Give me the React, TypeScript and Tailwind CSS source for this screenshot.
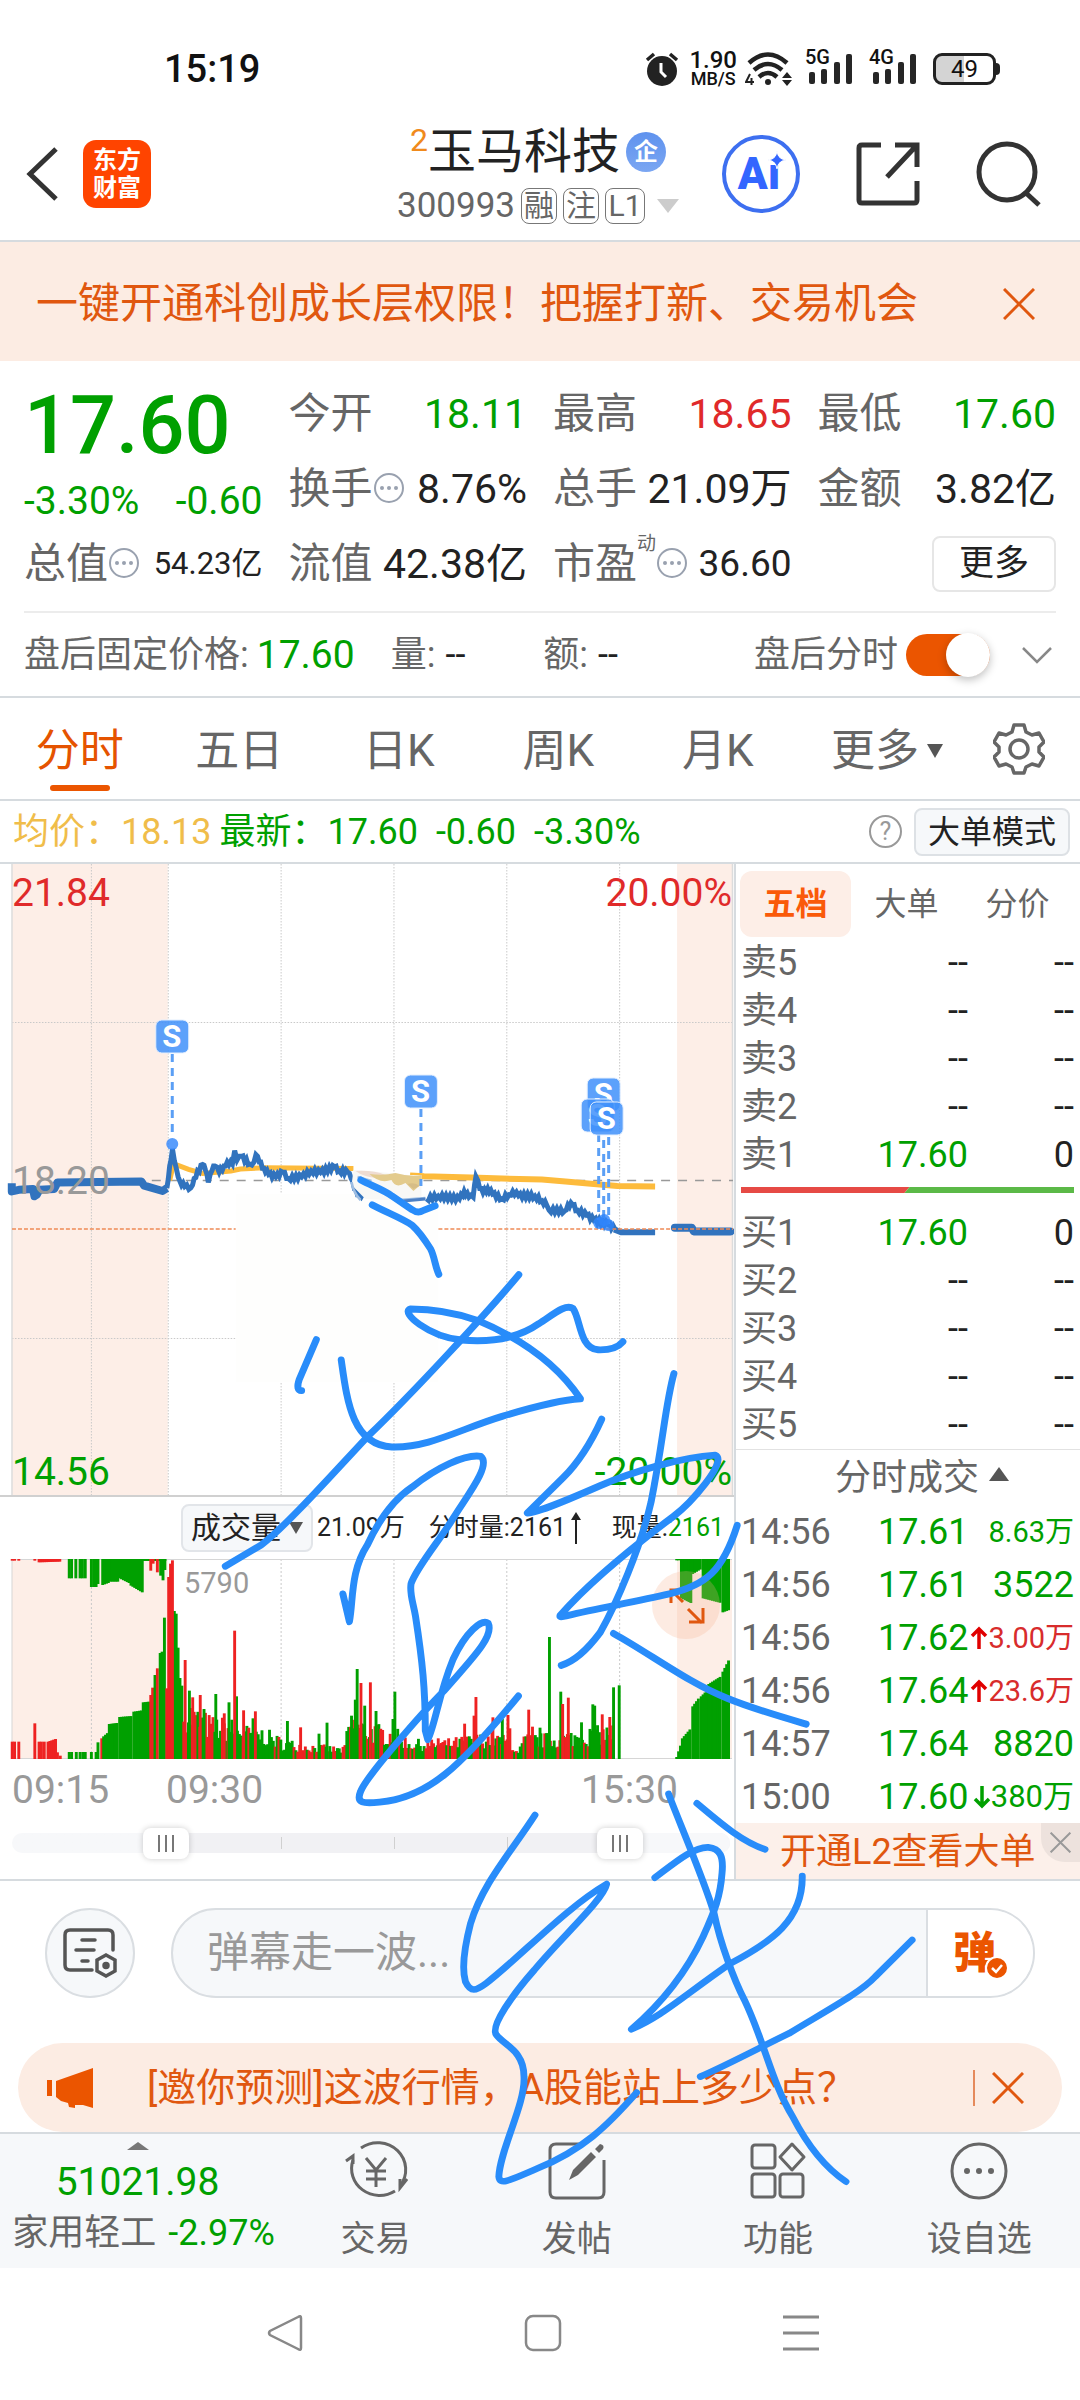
import React from "react";

type Point = [number, number];

const FONT = "font-[Roboto,'Noto_Sans_CJK_SC',sans-serif]";

/* ---------- data ---------- */

const TABS = ["分时", "五日", "日K", "周K", "月K"];

const SELLS = [
  ["卖5", "--", "--"],
  ["卖4", "--", "--"],
  ["卖3", "--", "--"],
  ["卖2", "--", "--"],
  ["卖1", "17.60", "0"],
];
const BUYS = [
  ["买1", "17.60", "0"],
  ["买2", "--", "--"],
  ["买3", "--", "--"],
  ["买4", "--", "--"],
  ["买5", "--", "--"],
];

type Trade = { time: string; price: string; amount: string; size?: string; dir?: "up" | "down" };
const TRADES: Trade[] = [
  { time: "14:56", price: "17.61", amount: "8.63万", size: "text-[29px] leading-10" },
  { time: "14:56", price: "17.61", amount: "3522" },
  { time: "14:56", price: "17.62", amount: "3.00万", size: "text-[29px] leading-10", dir: "up" },
  { time: "14:56", price: "17.64", amount: "23.6万", size: "text-[29px] leading-10", dir: "up" },
  { time: "14:57", price: "17.64", amount: "8820" },
  { time: "15:00", price: "17.60", amount: "380万", size: "text-[31px] leading-10", dir: "down" },
];

/* Chart samples are stored on a 1557-unit wide grid and scaled to the plot. */
const toX = (v: number) => v / 2.119;
const toY = (v: number) => v / 2.45 - 4;

const AUCTION: Point[] = [[25, 792], [25, 812], [40, 808], [70, 806], [73, 824], [78, 820], [84, 808], [115, 806], [122, 790], [300, 788], [306, 798], [345, 811], [354, 804]];
const PRICE_A: Point[] = [[354, 804], [360, 750], [366, 708], [374, 755], [382, 788], [392, 800], [405, 803], [412, 780], [430, 746], [436, 760], [442, 790], [450, 760], [456, 750], [465, 765], [475, 750], [482, 740], [493, 745], [498, 712], [503, 735], [512, 726], [530, 745], [539, 740], [543, 722], [550, 740], [560, 755], [570, 770], [585, 776], [600, 765], [612, 780], [640, 776], [660, 762], [680, 765], [710, 752], [720, 762], [738, 765], [745, 780], [752, 805], [762, 820], [775, 822]];
const PRICE_B: Point[] = [[905, 830], [930, 824], [975, 830], [985, 812], [995, 826], [1004, 826], [1010, 776], [1018, 805], [1025, 815], [1035, 805], [1045, 818], [1065, 830], [1080, 820], [1088, 812], [1100, 822], [1135, 824], [1150, 835], [1160, 845], [1165, 858], [1198, 860], [1205, 845], [1215, 845], [1225, 858], [1245, 870], [1260, 882], [1290, 892], [1305, 905]];
const AVERAGE_A: Point[] = [[360, 785], [368, 745], [378, 748], [400, 758], [430, 768], [490, 762], [510, 757], [560, 754], [750, 756]];
const AVERAGE_B: Point[] = [[870, 773], [900, 775], [1000, 778], [1150, 783], [1200, 788], [1260, 794], [1310, 799], [1390, 800]];

const path = (pts: Point[]) => "M" + pts.map(([x, y]) => `${toX(x).toFixed(1)},${toY(y).toFixed(1)}`).join("L");

const jagged = (pts: Point[]): Point[] => {
  const out: Point[] = [];
  let k = 0;
  for (let i = 0; i < pts.length - 1; i++) {
    const [x0, y0] = pts[i];
    const [x1, y1] = pts[i + 1];
    const n = Math.max(1, Math.round((x1 - x0) / 4));
    for (let j = 0; j < n; j++) {
      const t = j / n;
      out.push([x0 + (x1 - x0) * t, y0 + (y1 - y0) * t + (j === 0 ? 0 : k % 2 ? 5 : -5)]);
      k++;
    }
  }
  out.push(pts[pts.length - 1]);
  return out;
};

const R = "#ee2222";
const G = "#00a000";
type Bar = [number, number, string];

const span = (from: number, to: number, h0: number, h1: number, color: string): Bar[] => {
  const out: Bar[] = [];
  for (let x = from; x <= to; x += 4) {
    const t = to === from ? 0 : (x - from) / (to - from);
    out.push([x, h0 + (h1 - h0) * t, color]);
  }
  return out;
};

const ENVELOPE: Point[] = [[396, 145], [410, 120], [450, 95], [500, 88], [530, 72], [560, 70], [600, 46], [650, 36], [730, 26], [742, 100], [790, 80], [840, 68], [870, 44], [930, 42], [980, 50], [1040, 60], [1080, 50], [1100, 15], [1112, 55], [1180, 58], [1240, 68], [1300, 78]];
const envelope = (x: number) => {
  const i = Math.max(1, ENVELOPE.findIndex(([ex]) => ex >= x));
  const [x0, y0] = ENVELOPE[i - 1];
  const [x1, y1] = ENVELOPE[i];
  return y0 + ((y1 - y0) * (x - x0)) / (x1 - x0);
};

const session = (): Bar[] => {
  const out: Bar[] = [];
  let seed = 7;
  const rnd = () => (seed = (seed * 16807) % 2147483647) / 2147483647;
  for (let x = 396; x <= 1300; x += 4) {
    const green = x > 530 && x < 592 ? 0.9 : 0.5;
    out.push([x, envelope(x) * (0.55 + rnd() * 0.85), rnd() < green ? G : R]);
  }
  return out;
};

const VOLUME: Bar[] = [
  ...[26, 31, 40].map((x): Bar => [x, 52, R]),
  [74, 107, R], [83, 52, R], [88, 52, R], [94, 52, R],
  ...span(102, 118, 52, 60, R), [122, 20, R], [128, 10, R],
  ...[147, 152, 162, 170, 176, 181, 194, 204].map((x): Bar => [x, 21, G]),
  [208, 50, G], [216, 62, R], ...span(220, 230, 68, 80, G), ...span(232, 248, 105, 108, G),
  ...span(254, 280, 126, 129, G), ...span(284, 302, 142, 146, G), ...span(304, 316, 170, 172, G),
  [320, 192, R], [324, 214, R], [329, 252, G], [334, 272, R], [340, 318, G], [344, 322, G], [349, 424, G],
  [354, 212, R], [370, 444, G], [374, 436, G], [358, 546, R], [362, 586, R], [366, 596, R],
  [378, 334, G], [382, 243, G], [386, 220, G], [390, 112, R],
  ...session(),
  [393, 297, R], [402, 205, G], [409, 185, R], [425, 192, R], [433, 150, G], [458, 195, G], [476, 137, R],
  [486, 170, G], [502, 188, G], [498, 385, R], [517, 146, R], [537, 122, G], [542, 143, R], [610, 114, G],
  [638, 95, R], [677, 76, G], [694, 109, G], [746, 130, G], [754, 178, G], [758, 270, G], [766, 228, R],
  [774, 160, G], [786, 230, R], [798, 144, G], [834, 120, G], [838, 202, G], [930, 62, R], [986, 106, R], [1006, 130, R],
  [1010, 186, R], [1046, 125, R], [1066, 120, G], [1078, 132, R], [1082, 92, R], [1122, 148, R], [1130, 97, R],
  [1146, 94, G], [1166, 366, G], [1190, 202, G], [1194, 165, R], [1206, 184, R], [1234, 110, G],
  [1258, 164, G], [1262, 160, G], [1278, 134, R], [1294, 126, R], [1302, 215, G], [1314, 221, G],
  ...span(1436, 1444, 6, 40, G), ...span(1448, 1466, 62, 92, G), ...span(1470, 1484, 158, 185, G),
  ...span(1488, 1500, 188, 205, G), ...span(1504, 1530, 225, 248, G), ...span(1534, 1549, 262, 304, G),
];

const MATCHED: Bar[] = [
  [26, 5, R], [31, 5, R], [40, 5, R], [74, 5, R], ...span(83, 128, 10, 8, R),
  ...[147, 152, 161, 170, 175, 181].map((x): Bar => [x, 58, G]),
  ...[194, 199, 204].map((x): Bar => [x, 84, G]), [208, 75, G],
  ...span(218, 230, 78, 72, G), ...span(234, 250, 68, 68, G), ...span(254, 274, 58, 72, G),
  ...span(278, 302, 80, 100, G), ...span(306, 350, 6, 6, G),
  [320, 35, R], [325, 14, R], [334, 40, R], [341, 50, G], [346, 64, G], [350, 33, G],
  ...span(1436, 1442, 4, 4, G), ...span(1446, 1466, 118, 132, G), ...span(1470, 1488, 45, 30, G),
  ...span(1492, 1530, 118, 132, G), ...span(1534, 1549, 160, 152, G),
];

/* ---------- small parts ---------- */

const CloseIcon = ({ className }: { className: string }) => (
  <svg viewBox="0 0 32 32" className={className} fill="none" stroke="currentColor" strokeWidth="3">
    <path d="M1 1l30 30M31 1L1 31" />
  </svg>
);

const Dots = () => (
  <svg viewBox="0 0 32 32" className="size-8 shrink-0 text-gray-400" fill="none" stroke="currentColor" strokeWidth="2">
    <circle cx="16" cy="15" r="14" />
    <g fill="currentColor" stroke="none">
      <circle cx="9" cy="15" r="2" />
      <circle cx="16" cy="15" r="2" />
      <circle cx="23" cy="15" r="2" />
    </g>
  </svg>
);

const Signal = ({ label }: { label: string }) => (
  <div className="relative h-9 w-12" role="img" aria-label={label}>
    <span className="absolute -top-1 left-0 text-[20px] leading-5 font-medium">{label}</span>
    <svg viewBox="0 0 48 36" className="size-full" fill="#262626">
      <rect x="4" y="21" width="6" height="12" rx="2" />
      <rect x="16" y="18" width="6" height="15" rx="2" />
      <rect x="29" y="11" width="6" height="22" rx="2" />
      <rect x="41" y="3" width="6" height="30" rx="2" />
    </svg>
  </div>
);

function StatusBar() {
  return (
    <div className="flex h-[121px] items-center justify-between pt-4 pr-[80px] pl-[164px] text-[#111]">
      <span className="text-[38px] leading-[44px] font-medium">15:19</span>
      <div className="flex items-center">
        <svg viewBox="0 0 34 36" className="mr-2.5 h-9 w-[34px]" fill="#222">
          <circle cx="17" cy="20" r="15" />
          <path d="M2 9l7-6M32 9l-7-6" stroke="#222" strokeWidth="3.500" />
          <path d="M16 12v9l5 5" stroke="#fff" strokeWidth="3" fill="none" />
        </svg>
        <div className="mr-2 flex flex-col items-center">
          <span className="text-[24px] leading-5 font-medium">1.90</span>
          <span className="text-[18px] leading-[18px] font-medium">MB/S</span>
        </div>
        <svg viewBox="0 0 48 36" className="mr-3 h-9 w-12" fill="none" stroke="#222" strokeWidth="4.500">
          <path d="M4 12q19-17 38 0M9 19q14-12 28 0M14 26q9-8 18 0" />
          <circle cx="23" cy="31" r="3" fill="#222" stroke="none" />
          <path d="M37 27l5-6 5 6zM37 29l5 6 5-6z" fill="#222" stroke="none" />
          <path d="M5 23l-4 8h8M6.500 27v7" strokeWidth="2" />
        </svg>
        <Signal label="5G" />
        <div className="w-4" />
        <Signal label="4G" />
        <div className="ml-4 flex items-center">
          <div className="flex h-8 w-[63px] items-center justify-center rounded-[9px] border-[3px] border-[#222] bg-linear-to-r from-[#d4d4d4] from-50% to-white to-50% text-[24px] leading-6">
            49
          </div>
          <div className="h-3 w-1 rounded-r bg-[#222]" />
        </div>
      </div>
    </div>
  );
}

function Header() {
  return (
    <header className="grid h-[121px] grid-cols-[1fr_auto_1fr] items-center border-b-2 border-[#d6dbdf] pr-[38px] pb-3.5 pl-[26px]">
      <div className="flex items-center gap-[25px]">
        <button aria-label="返回">
          <svg viewBox="0 0 32 54" className="h-[54px] w-8" fill="none" stroke="#333" strokeWidth="5">
            <path d="M30 2L4 27l26 25" />
          </svg>
        </button>
        <div className="flex size-[68px] flex-col items-center justify-center rounded-[13px] bg-[#ff4400] text-[24px] leading-7 font-bold text-white">
          <span>东方</span>
          <span>财富</span>
        </div>
      </div>
      <div className="flex flex-col items-center pl-2">
        <div className="flex items-center">
          <span className="self-start text-[32px] leading-9 text-[#f08a1c]">2</span>
          <h1 className="text-[48px] leading-[60px] text-[#222]">玉马科技</h1>
          <span className="ml-1.5 flex size-10 items-center justify-center rounded-full bg-linear-to-b from-[#5f92ee] to-[#7ba6f2] text-[24px] leading-6 font-bold text-white">企</span>
        </div>
        <div className="mt-1 flex items-center gap-1.5 text-[35px] leading-10 text-[#666]">
          <span>300993</span>
          <span className="flex size-9 items-center justify-center rounded-lg border border-[#777] text-[30px] leading-8">融</span>
          <span className="flex size-9 items-center justify-center rounded-lg border border-[#777] text-[30px] leading-8">注</span>
          <span className="flex h-9 w-10 items-center justify-center rounded-lg border border-[#777] text-[30px] leading-8">L1</span>
          <svg viewBox="0 0 22 14" className="ml-1.5 h-3.5 w-[22px]" fill="#ccc"><path d="M0 0h22L11 14z" /></svg>
        </div>
      </div>
      <div className="flex items-center justify-end gap-14">
        <button aria-label="Ai" className="relative flex size-[78px] items-center justify-center rounded-full border-4 border-[#3d6ff0] text-[#3366ff]">
          <span className="pr-1 text-[44px] leading-[44px] font-black">Aı</span>
          <svg viewBox="0 0 16 16" className="absolute top-3 right-2.5 size-[18px]" fill="currentColor" stroke="#fff" strokeWidth="1"><path d="M8 0q1 7 8 8q-7 1-8 8q-1-7-8-8q7-1 8-8z" /></svg>
        </button>
        <button aria-label="分享">
          <svg viewBox="0 0 64 64" className="size-16" fill="none" stroke="#333" strokeWidth="5">
            <path d="M25 3H6q-3 0-3 3v52q0 3 3 3h52q3 0 3-3V39M39 3h22v22M61 3L31 35" />
          </svg>
        </button>
        <button aria-label="搜索">
          <svg viewBox="0 0 66 66" className="size-[66px]" fill="none" stroke="#333" strokeWidth="5">
            <circle cx="31" cy="31" r="28" />
            <path d="M50 52l13 12" />
          </svg>
        </button>
      </div>
    </header>
  );
}

function Metric({ label, value, color = "text-[#222]", extra }: { label: string; value: string; color?: string; extra?: React.ReactNode }) {
  return (
    <div className="flex h-[75px] items-center justify-between whitespace-nowrap">
      <span className="flex items-center text-[42px] leading-[50px] text-[#666]">{label}{extra}</span>
      <span className={"text-[41px] leading-[50px] " + color}>{value}</span>
    </div>
  );
}

function Quote() {
  return (
    <section className="px-6">
      <div className="grid grid-cols-4 gap-x-[26px] border-b-2 border-[#ececec] pt-[15px] pb-2.5">
        <div className="row-span-2 flex flex-col text-[#00a000]">
          <span className="pt-2 text-[81px] leading-[84px] font-medium">17.60</span>
          <div className="flex justify-between pt-2 text-[39px] leading-[50px]">
            <span>-3.30%</span>
            <span>-0.60</span>
          </div>
        </div>
        <Metric label="今开" value="18.11" color="text-[#00a000]" />
        <Metric label="最高" value="18.65" color="text-[#e02a2a]" />
        <Metric label="最低" value="17.60" color="text-[#00a000]" />
        <Metric label="换手" value="8.76%" extra={<Dots />} />
        <Metric label="总手" value="21.09万" />
        <Metric label="金额" value="3.82亿" />
        <div className="flex h-[75px] items-center justify-between whitespace-nowrap">
          <span className="flex items-center text-[42px] leading-[50px] text-[#666]">总值<Dots /></span>
          <span className="text-[31px] leading-10 text-[#222]">54.23亿</span>
        </div>
        <Metric label="流值" value="42.38亿" />
        <div className="flex h-[75px] items-center justify-between whitespace-nowrap">
          <span className="flex items-center text-[42px] leading-[50px] text-[#666]">
            市盈<sup className="-top-5 text-[19px] leading-5">动</sup><Dots />
          </span>
          <span className="text-[37px] leading-[50px] text-[#222]">36.60</span>
        </div>
        <div className="flex h-[75px] items-center justify-end">
          <button className="h-[56px] w-[124px] rounded-lg border-2 border-[#e6e6e6] text-[35px] leading-10 text-[#222]">更多</button>
        </div>
      </div>
    </section>
  );
}

function AfterHours() {
  return (
    <section className="flex h-[85px] items-center border-b-2 border-[#d6dbdf] pr-7 pl-6 text-[36px] leading-[44px] whitespace-nowrap text-[#666]">
      <span>盘后固定价格:</span>
      <span className="ml-2 text-[39px] text-[#00a000]">17.60</span>
      <span className="ml-9">量:</span>
      <span className="ml-2.5 text-[#222]">--</span>
      <span className="ml-[78px]">额:</span>
      <span className="ml-2.5 text-[#222]">--</span>
      <label className="ml-auto flex items-center gap-2">
        盘后分时
        <span className="relative h-[42px] w-[84px]">
          <input type="checkbox" role="switch" defaultChecked className="absolute inset-0 size-full appearance-none rounded-full bg-[#eb5500]" />
          <span className="pointer-events-none absolute -top-px right-0 size-11 rounded-full bg-white shadow-[0_3px_8px_rgba(0,0,0,0.25)]" />
        </span>
      </label>
      <button aria-label="展开" className="ml-8">
        <svg viewBox="0 0 30 18" className="h-[18px] w-[30px]" fill="none" stroke="#888" strokeWidth="2.500"><path d="M1 2l14 14L29 2" /></svg>
      </button>
    </section>
  );
}

function ChartTabs() {
  return (
    <nav className="flex h-[103px] items-center border-b-2 border-[#d6dbdf] pt-1 text-[44px] leading-[54px] text-[#666]">
      {TABS.map((tab, i) => (
        <button key={tab} className={i === 0 ? "relative h-full flex-1 text-[#e55300]" : "h-full flex-1"}>
          {tab}
          {i === 0 && <span className="absolute bottom-2 left-1/2 h-1.5 w-[60px] -translate-x-1/2 rounded-full bg-[#eb5500]" />}
        </button>
      ))}
      <button className="flex h-full flex-1 items-center justify-end gap-2">
        更多
        <svg viewBox="0 0 16 14" className="mr-3.5 h-3.5 w-4" fill="#555"><path d="M0 0h16L8 14z" /></svg>
      </button>
      <button aria-label="设置" className="flex h-full w-[123px] items-center justify-center pb-1">
        <svg viewBox="0 0 52 52" className="size-[52px]" fill="none" stroke="#666" strokeWidth="3.500" strokeLinejoin="round">
          <path d="M21 2h10l2 7 6 3 7-2 5 9-5 5v5l5 5-5 9-7-2-6 3-2 6H21l-2-6-6-3-7 2-5-9 5-5v-5l-5-5 5-9 7 2 6-3z" />
          <circle cx="26" cy="26" r="9" />
        </svg>
      </button>
    </nav>
  );
}

function InfoLine() {
  return (
    <div className="flex h-[61px] items-center pr-2.5 pl-[13px] text-[36px] leading-[44px] whitespace-nowrap">
      <span className="text-[#f0bd4a]">均价：18.13</span>
      <span className="ml-2 flex gap-[18px] text-[#00a000]">
        <span>最新：17.60</span>
        <span>-0.60</span>
        <span>-3.30%</span>
      </span>
      <button aria-label="帮助" className="ml-auto flex size-[33px] items-center justify-center rounded-full border-2 border-[#999] text-[25px] leading-6 text-[#999]">?</button>
      <button className="ml-3 h-12 w-[156px] rounded-lg border-2 border-[#dde1e5] bg-[#f6f8fa] text-[32px] leading-10 text-[#222]">大单模式</button>
    </div>
  );
}

const MARKS: Point[] = [[172, 172], [421, 227], [604, 230], [598, 251], [607, 254]];

function PriceChart() {
  return (
    <div className="relative text-[39px] leading-[46px]">
      <svg viewBox="0 0 735 633" preserveAspectRatio="none" className="h-[633px] w-full" fill="none">
        <rect x="12" y="0" width="156" height="632" fill="#fdeee7" />
        <rect x="678" y="0" width="55" height="632" fill="#fdeee7" />
        <path d="M91.500 0V632M168.500 0V632M281.500 0V632M394.500 0V632M507.500 0V632M620.500 0V632M12 158.500H733M12 474.500H733" stroke="#c9c9c9" strokeDasharray="1.500 1.500" />
        <rect x="236" y="330" width="203" height="188" fill="#fefefd" />
        <path d="M12 0V632M733.500 0V632" stroke="#dcdcdc" strokeWidth="1.500" />
        <path d="M0 632H735" stroke="#d0d0d0" strokeWidth="2" />
        <path d="M152 316.500H734" stroke="#999" strokeWidth="1.500" strokeDasharray="9 8" />
        <path d={path(AUCTION)} stroke="#3173be" strokeWidth="8" strokeLinejoin="round" />
        <path d={path(AVERAGE_A)} stroke="#fdbb3c" strokeWidth="5" />
        <path d={path(AVERAGE_B)} stroke="#fdbb3c" strokeWidth="6" />
        <path d={path(jagged(PRICE_A))} stroke="#3173be" strokeWidth="5" />
        <path d={path(jagged(PRICE_B))} stroke="#3173be" strokeWidth="5" />
        <path d={path([[1303, 905], [1318, 912], [1390, 912]])} stroke="#3173be" strokeWidth="6" />
        <path d={path([[1432, 901], [1468, 901], [1472, 910], [1550, 910]])} stroke="#3173be" strokeWidth="8" strokeLinecap="round" strokeLinejoin="round" />
        <g>
          <path d="M354 306l16 1 40 4 12 0 0 22-14 4-42-2-14-14z" fill="#f8f8f6" />
          <path d="M356 307q18-1 30 4l-8 3q-14-1-22-7z" fill="#efdcd2" />
          <path d="M370 310q14 2 26-1 14 4 26 2v9l-8 7-8-8q-10 6-14-3-12 4-22-6z" fill="#e3cb8d" />
          <path d="M408 320q8-2 12 2l-6 3z" fill="#d6bd86" />
          <path d="M352 318q2 11 9 18M358 313l14 4M400 336l26-2" stroke="#9dbde2" strokeWidth="2.500" />
          <path d="M404 337l22-2" stroke="#4d80c4" strokeWidth="3" />
        </g>
        <path d="M12 365H236M439 365H734" stroke="#ee8b57" strokeWidth="1.500" strokeDasharray="4 2" />
        <g stroke="#5b9ff5" strokeWidth="3" strokeDasharray="8 6">
          <path d="M172.500 190V274M421.500 245V322M599.500 270V356M604.500 276V354M609.500 273V360" />
        </g>
        <g fill="#2f84fb" fillOpacity="0.800">
          <circle cx="172.500" cy="280" r="6" />
          <circle cx="600" cy="359" r="6" />
          <circle cx="605" cy="356" r="6" />
          <circle cx="609" cy="361" r="6" />
        </g>
        {MARKS.map(([x, y], i) => (
          <g key={i}>
            <rect x={x - 16} y={y - 16} width="33" height="33" rx="6" fill="#4090fa" fillOpacity="0.850" stroke="#e4effe" strokeWidth="1" />
            <text x={x} y={y + 11} textAnchor="middle" fill="#fff" fontSize="31" fontWeight="700" fontFamily="Roboto">S</text>
          </g>
        ))}
      </svg>
      <span className="absolute top-1.5 left-3 text-[#e02a2a]">21.84</span>
      <span className="absolute top-1.5 right-0.5 text-[#e02a2a]">20.00%</span>
      <span className="absolute top-[294px] left-3 text-[#999]">18.20</span>
      <span className="absolute bottom-0.5 left-3 text-[#00a000]">14.56</span>
      <span className="absolute right-0.5 bottom-0.5 text-[#00a000]">-20.00%</span>
    </div>
  );
}

function VolumeChart() {
  return (
    <div>
      <div className="flex h-[62px] items-center pr-2.5 pl-[181px] text-[25px] leading-8 whitespace-nowrap text-[#222]">
        <button className="mr-1 flex h-12 w-[132px] items-center justify-between rounded-lg border-2 border-[#e2e5e9] bg-[#f6f8fa] px-2 text-[30px] leading-9">
          成交量
          <svg viewBox="0 0 14 12" className="h-3 w-3.5" fill="#555"><path d="M0 0h14L7 12z" /></svg>
        </button>
        <span>21.09万</span>
        <span className="ml-6 flex items-center">
          分时量:2161
          <svg viewBox="0 0 12 32" className="ml-1 h-8 w-3" fill="#222"><path d="M6 0l5 8H7v24H5V8H1z" /></svg>
        </span>
        <span className="ml-auto">现量:<span className="text-[#00a000]">2161</span></span>
      </div>
      <div className="relative">
        <svg viewBox="0 0 735 200" preserveAspectRatio="none" className="h-[200px] w-full">
          <rect x="12" y="0" width="156" height="200" fill="#fdeee7" />
          <rect x="678" y="0" width="55" height="200" fill="#fdeee7" />
          <path d="M91.500 0V200M281.500 0V200M394.500 0V200M507.500 0V200M620.500 0V200" stroke="#c9c9c9" strokeDasharray="2 2" />
          <path d="M12 .5H733M12 199.500H733M12 0V200" stroke="#d6d6d6" />
          {VOLUME.map(([x, h, c], i) => (
            <rect key={i} x={toX(x) - 1.5} y={200 - h / 3} width="2.900" height={h / 3} fill={c} />
          ))}
          {MATCHED.map(([x, h, c], i) => (
            <rect key={i} x={toX(x) - 1.5} y="0" width="2.900" height={h / 3} fill={c} />
          ))}
        </svg>
        <span className="absolute top-2 left-[184px] text-[29px] leading-8 text-[#999]">5790</span>
        <button aria-label="放大" className="absolute top-3 right-[14px] size-[68px] rounded-full bg-[#f7b08a]/25">
          <svg viewBox="0 0 68 68" className="size-full" fill="none" stroke="#e0570f" strokeWidth="3">
            <path d="M19 32V19h13M20 20l11 11M36 38l14 14M51 37v14H37" />
          </svg>
        </button>
      </div>
      <div className="flex h-[62px] items-center text-[39px] leading-[46px] text-[#999]">
        <span className="ml-3 w-[154px]">09:15</span>
        <span>09:30</span>
        <span className="mr-14 ml-auto">15:30</span>
      </div>
      <div className="relative h-[58px]">
        <div className="absolute top-3 right-1 left-3 h-5 rounded-full bg-linear-to-r from-[#f7f8fa] from-21% via-[#f1f1f4] via-21% to-[#f1f1f4]" />
        <div className="absolute top-3 right-1 h-5 w-[111px] rounded-r-full bg-[#f7f8fa]" />
        <span className="absolute top-4 left-[281px] h-3 w-px bg-[#d0d0d0]" />
        <span className="absolute top-4 left-[394px] h-3 w-px bg-[#d0d0d0]" />
        <span className="absolute top-4 left-[507px] h-3 w-px bg-[#d0d0d0]" />
        {["left-[143px]", "right-[91px]"].map((pos, i) => (
          <label key={pos} className={"absolute top-[7px] flex h-[31px] w-[46px] items-center justify-center gap-[5px] rounded-lg bg-white shadow-[0_0_6px_rgba(0,0,0,0.2)] " + pos}>
            <span className="h-[17px] w-0.5 bg-[#777]" />
            <span className="h-[17px] w-0.5 bg-[#777]" />
            <span className="h-[17px] w-0.5 bg-[#777]" />
            <input type="range" aria-label={i ? "结束时间" : "开始时间"} className="absolute inset-0 size-full opacity-0" />
          </label>
        ))}
      </div>
    </div>
  );
}

function BookTable({ rows, label }: { rows: string[][]; label: string }) {
  return (
    <table aria-label={label} className="w-full table-fixed text-[36px] leading-[46px]">
      <tbody>
        {rows.map(([name, price, qty]) => (
          <tr key={name} className="h-12">
            <th scope="row" className="w-[100px] p-0 text-left font-normal text-[#666]">{name}</th>
            <td className={price === "--" ? "p-0 text-right text-[#222]" : "p-0 text-right text-[#00a000]"}>{price}</td>
            <td className="w-[106px] p-0 text-right text-[#222]">{qty}</td>
          </tr>
        ))}
      </tbody>
    </table>
  );
}

function OrderBook() {
  return (
    <aside className="flex w-[346px] shrink-0 flex-col border-l-2 border-[#d6dbdf]">
      <div className="flex h-[73px] pt-[7px] pl-1 text-[32px] leading-10 text-[#666]">
        <button className="h-[66px] w-[111px] rounded-xl bg-[#fdeee7] font-bold text-[#fa5a0a]">五档</button>
        <button className="h-[66px] w-[111px]">大单</button>
        <button className="h-[66px] w-[111px]">分价</button>
      </div>
      <div className="pt-0.5 pr-1.5 pl-[5px]">
        <BookTable rows={SELLS} label="卖盘" />
        <svg viewBox="0 0 334 6" preserveAspectRatio="none" className="mt-2 mb-4 h-1.5 w-full">
          <path d="M0 0h169l-5 6H0z" fill="#e64a45" />
          <path d="M169 0h165v6H164z" fill="#5bb947" />
        </svg>
        <BookTable rows={BUYS} label="买盘" />
      </div>
      <button className="flex h-14 items-center justify-center gap-2.5 border-t border-[#e2e2e2] pl-7 text-[36px] leading-[44px] text-[#666]">
        分时成交
        <svg viewBox="0 0 20 14" className="mb-2 h-3.5 w-5" fill="#555"><path d="M0 14h20L10 0z" /></svg>
      </button>
      <table aria-label="分时成交" className="mr-1.5 ml-[5px] text-[36px] leading-[44px]">
        <tbody>
          {TRADES.map((t, i) => (
            <tr key={i} className="h-[53px]">
              <td className="w-[137px] p-0 text-[#666]">{t.time}</td>
              <td className="w-[90px] p-0 text-[#00a000]">{t.price}</td>
              <td className={t.dir === "up" ? "p-0 text-[#d82c2c]" : "p-0 text-[#00a000]"}>
                <span className="flex items-center justify-end">
                  {t.dir && (
                    <svg viewBox="0 0 18 24" className={t.dir === "up" ? "h-6 w-[18px] shrink-0 text-[#e00000]" : "h-6 w-[18px] shrink-0 rotate-180"} fill="none" stroke="currentColor" strokeWidth="3.500">
                      <path d="M9 23V3M2 10l7-7 7 7" />
                    </svg>
                  )}
                  <span className={t.size ?? ""}>{t.amount}</span>
                </span>
              </td>
            </tr>
          ))}
        </tbody>
      </table>
      <div className="relative flex flex-1 items-center bg-[#fcf0ea] pt-0.5 pl-11 text-[36px] leading-[44px] text-[#e0570f]">
        <a href="#l2">开通L2查看大单</a>
        <button aria-label="关闭" className="absolute top-0 right-0 flex h-[39px] w-[39px] items-center justify-center rounded-bl-3xl bg-[#ede2dd] text-[#999]">
          <CloseIcon className="size-[21px]" />
        </button>
      </div>
    </aside>
  );
}

function CommentBar() {
  return (
    <div className="flex h-[162px] items-start gap-9 px-[45px] pt-[27px]">
      <button aria-label="弹幕设置" className="flex size-[90px] shrink-0 items-center justify-center rounded-full border-2 border-[#dadee2] bg-[#f6f8fa]">
        <svg viewBox="0 0 56 52" className="h-[52px] w-14" fill="none" stroke="#555" strokeWidth="3.500" strokeLinecap="round">
          <path d="M30 43H8q-5 0-5-5V8q0-5 5-5h38q5 0 5 5v15M20 13h13M14 23h18M20 34h6" />
          <path d="M44 28l9 5v11l-9 5-9-5V33z" />
          <circle cx="44" cy="38.500" r="2" fill="#555" />
        </svg>
      </button>
      <div className="flex h-[90px] flex-1 overflow-hidden rounded-full border-2 border-[#dadee2] bg-[#f6f8fa]">
        <input aria-label="弹幕" placeholder="弹幕走一波..." className="min-w-0 flex-1 bg-transparent pl-[34px] text-[42px] leading-[52px] text-[#222] placeholder:text-[#999]" />
        <button aria-label="弹" className="relative w-[107px] border-l-2 border-[#dadee2] bg-white pr-3 text-[43px] leading-[52px] font-black text-[#eb5500]">
          弹
          <svg viewBox="0 0 24 24" className="absolute right-6 bottom-4 size-6" fill="#eb5500" stroke="#fff" strokeWidth="2">
            <circle cx="12" cy="12" r="11" />
            <path d="M7 12l4 4 6-7" fill="none" strokeWidth="2.500" />
          </svg>
        </button>
      </div>
    </div>
  );
}

function Promo() {
  return (
    <div className="mx-[18px] flex h-[89px] items-center rounded-full bg-[#fcece3] pr-[38px] pl-[29px] text-[39px] leading-[50px] whitespace-nowrap text-[#e0570f]">
      <svg viewBox="0 0 46 40" className="h-10 w-[46px]" fill="#eb5500">
        <path d="M46 0v40l-10-3h-8v3l-6-1-1-4-7-2-5-4V13zM0 12h5v16H0z" />
      </svg>
      <a href="#forecast" className="ml-[54px]">[邀你预测]这波行情，A股能站上多少点？</a>
      <span className="ml-auto h-9 w-0.5 bg-[#e58a5c]" />
      <button aria-label="关闭" className="ml-[17px]"><CloseIcon className="size-8" /></button>
    </div>
  );
}

const ACTIONS: { label: string; icon: React.ReactNode }[] = [
  {
    label: "交易",
    icon: (
      <>
        <path d="M17 8a28 27 0 0 1 39 38M51 51A28 27 0 0 1 9 20" />
        <path d="M2 21l7-5v8M63 39l-7 9v-9" />
        <path d="M22 18l10 12 10-12M32 30v17M22 31h20M22 39h20" />
      </>
    ),
  },
  {
    label: "发帖",
    icon: (
      <>
        <path d="M40 4H11q-6 0-6 6v42q0 6 6 6h42q6 0 6-6V20" />
        <path d="M24 40l4-10 18-18 5 5-18 18zM50 9l5-5q5 1 3 5l-4 4z" fill="#666" stroke="none" />
      </>
    ),
  },
  {
    label: "功能",
    icon: (
      <>
        <rect x="6" y="5" width="23" height="23" rx="3" />
        <rect x="6" y="34" width="23" height="23" rx="3" />
        <rect x="34" y="34" width="23" height="23" rx="3" />
        <path d="M46 4l12 13-12 13-12-13z" strokeLinejoin="round" />
      </>
    ),
  },
  {
    label: "设自选",
    icon: (
      <>
        <circle cx="32" cy="31" r="27" />
        <g fill="#666" stroke="none">
          <circle cx="20" cy="31" r="3" />
          <circle cx="32" cy="31" r="3" />
          <circle cx="44" cy="31" r="3" />
        </g>
      </>
    ),
  },
];

function BottomBar() {
  return (
    <footer className="flex h-[136px] border-t-2 border-[#d6dbdf] bg-[#f6f8fa]">
      <div className="flex w-[275px] flex-col items-center pt-2 whitespace-nowrap">
        <svg viewBox="0 0 22 8" className="h-2 w-[22px]" fill="#777"><path d="M0 8h22L11 0z" /></svg>
        <span className="pt-2 text-[39px] leading-[48px] text-[#00a000]">51021.98</span>
        <span className="flex gap-3 pt-0.5 pl-3 text-[36px] leading-[50px] text-[#666]">
          家用轻工<span className="text-[#00a000]">-2.97%</span>
        </span>
      </div>
      {ACTIONS.map(({ label, icon }) => (
        <button key={label} className="flex flex-1 flex-col items-center text-[35px] leading-[44px] text-[#666]">
          <svg viewBox="0 0 64 62" className="mt-1.5 mb-4 h-[62px] w-16 shrink-0" fill="none" stroke="#666" strokeWidth="3">{icon}</svg>
          {label}
        </button>
      ))}
    </footer>
  );
}

function SystemNav() {
  return (
    <nav className="flex h-[130px] items-center justify-center gap-[221px] pl-1.5">
      <button aria-label="后退"><svg viewBox="0 0 36 38" className="h-[38px] w-9" fill="none" stroke="#888" strokeWidth="2.500"><path d="M34 4v30q0 3-3 1L3 21q-2-2 0-4L31 3q3-2 3 1z" /></svg></button>
      <button aria-label="主页"><svg viewBox="0 0 38 38" className="size-[38px]" fill="none" stroke="#888" strokeWidth="2.500"><rect x="2" y="2" width="34" height="34" rx="7" /></svg></button>
      <button aria-label="多任务"><svg viewBox="0 0 36 38" className="h-[38px] w-9" stroke="#888" strokeWidth="3"><path d="M0 3h36M0 19h36M0 35h36" /></svg></button>
    </nav>
  );
}

/* Freehand marks drawn over the whole screen. */
function Doodle() {
  return (
    <svg viewBox="0 0 1080 2400" className="pointer-events-none absolute top-0 left-0 w-full" fill="none" stroke="#288cfa" strokeLinecap="round" strokeLinejoin="round" aria-hidden="true">
      <g transform="translate(200 1200) scale(.4082)" strokeWidth="17">
        <path d="M394-49C420-35 450-25 470-10L520 24Q534 34 546 26L576 14" />
        <path d="M422 12C460 32 495 45 520 62Q540 80 565 120C575 140 575 160 585 182" />
        <path d="M285 342L243 440Q234 466 249 467" />
        <path d="M346 392C360 490 372 600 470 605C560 608 640 560 740 530C800 512 880 490 932 487C880 410 800 345 680 295C620 274 560 267 515 267C490 275 560 335 640 343C720 350 785 335 830 303C860 285 895 252 914 266C932 290 930 365 975 367C1005 368 1025 360 1036 347" />
        <path d="M781 183C700 280 520 475 410 580C330 665 210 800 150 845L62 897" />
        <path d="M350 965L366 1033C376 980 368 910 410 845C440 780 480 730 520 703C580 655 650 622 688 628C715 650 650 730 620 780C590 830 530 900 517 940C513 965 522 985 528 1020C545 1130 552 1200 552 1300L558 1322C575 1290 585 1210 620 1125C650 1060 690 1025 706 1037C722 1070 660 1130 600 1200C540 1260 405 1415 393 1450C382 1478 400 1479 440 1475C560 1465 640 1385 780 1215" />
        <path d="M984 537C960 590 930 640 890 680L802 767C830 765 900 735 980 700C1060 665 1180 630 1262 625C1295 640 1200 745 1160 775C1060 850 950 940 882 1018C880 1024 890 1020 900 1018C980 1000 1060 985 1150 965C1240 943 1280 910 1316 797" />
        <path d="M1161 425C1140 500 1135 590 1105 740C1080 850 1020 990 980 1060C950 1100 920 1130 885 1140" />
        <path d="M1013 1062C1100 1110 1200 1185 1290 1220C1350 1245 1420 1265 1485 1284" />
      </g>
      <g transform="translate(400 1750) scale(.3444 .3333)" strokeWidth="20">
        <path d="M392 195C320 310 240 400 205 520C185 600 180 660 190 695C205 728 220 723 250 700C350 620 480 475 600 402C590 450 470 560 390 660C330 730 260 830 280 855C300 885 360 900 360 980C365 1060 290 1200 287 1280C290 1308 320 1290 400 1255C530 1200 600 1130 687 1028" />
        <path d="M780 132C800 190 880 380 912 490C930 580 970 690 1000 750C1060 880 1080 1000 1140 1100C1180 1180 1230 1250 1295 1295" />
        <path d="M862 160C920 210 990 275 1060 298" />
        <path d="M740 383C790 345 850 290 895 292C930 295 940 320 935 370C930 440 915 480 880 560C830 670 760 760 672 838C760 800 820 740 960 640C1080 575 1170 510 1168 378" />
        <path d="M872 980C950 945 1050 890 1130 850C1250 775 1340 725 1380 680L1487 570" />
      </g>
    </svg>
  );
}

export default function App() {
  return (
    <div className={"relative w-full overflow-hidden bg-white " + FONT}>
      <StatusBar />
      <Header />
      <div className="flex h-[119px] items-center justify-between bg-[#fcece3] pt-1 pr-[45px] pl-9 text-[42px] leading-[52px] whitespace-nowrap text-[#e0570f]">
        <a href="#open">一键开通科创成长层权限！把握打新、交易机会</a>
        <button aria-label="关闭"><CloseIcon className="size-8" /></button>
      </div>
      <Quote />
      <AfterHours />
      <ChartTabs />
      <InfoLine />
      <main className="flex border-y-2 border-[#d6dbdf]">
        <div className="min-w-0 flex-1">
          <PriceChart />
          <VolumeChart />
        </div>
        <OrderBook />
      </main>
      <CommentBar />
      <Promo />
      <BottomBar />
      <SystemNav />
      <Doodle />
    </div>
  );
}
